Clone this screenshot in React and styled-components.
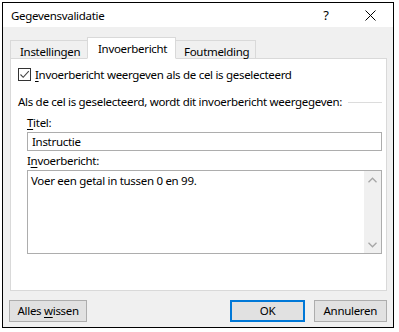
import React from "react";
import styled, { createGlobalStyle } from "styled-components";

const Global = createGlobalStyle`
  html, body { margin: 0; padding: 0; background: #fff; }
  body { font-family: "Noto Sans", "Open Sans", sans-serif; font-size: 12px; color: #000; }
  * { box-sizing: border-box; }
`;

const Window = styled.div`
  margin: 2px 0 0 2px;
  width: 392px;
  height: 326px;
  border: 1px solid #000;
  display: flex;
  flex-direction: column;
  background: #f0f0f0;
  font-family: "Noto Sans", "Open Sans", sans-serif;
  font-size: 11.5px;
  letter-spacing: -0.3px;
`;

const TitleBar = styled.div`
  height: 24px;
  background: #fff;
  display: flex;
  align-items: center;
  padding-left: 8px;
`;

const TitleText = styled.div`
  flex: 1;
  line-height: 16px;
  margin-top: 1px;
`;

const HelpButton = styled.div`
  width: 30px;
  text-align: center;
  font-size: 13px;
  line-height: 16px;
  margin-right: 6px;
`;

const CloseButton = styled.div`
  width: 46px;
  height: 24px;
  display: flex;
  align-items: center;
  justify-content: center;
`;

const Body = styled.div`
  flex: 1;
  display: flex;
  flex-direction: column;
  padding: 10px 6px 6px 7px;
`;

const TabRow = styled.div`
  display: flex;
  align-items: flex-end;
  height: 22px;
  margin-bottom: -1px;
  position: relative;
  z-index: 1;
`;

const Tab = styled.div`
  width: ${(p) => p.$w}px;
  height: ${(p) => (p.$active ? 22 : 19)}px;
  background: ${(p) => (p.$active ? "#fff" : "#f0f0f0")};
  border: 1px solid #d9d9d9;
  border-bottom: ${(p) => (p.$active ? "1px solid #fff" : "1px solid #d9d9d9")};
  border-left: ${(p) => (p.$noLeft ? "none" : "1px solid #d9d9d9")};
  border-right: ${(p) => (p.$noRight ? "none" : "1px solid #d9d9d9")};
  padding-left: ${(p) => p.$pl}px;
  line-height: 16px;
  padding-top: 3px;
  white-space: nowrap;
`;

const Panel = styled.div`
  height: 233px;
  background: #fff;
  border: 1px solid #d9d9d9;
  padding: 9px 4px 0 7px;
  display: flex;
  flex-direction: column;
`;

const CheckRow = styled.div`
  display: flex;
  align-items: center;
  height: 13px;
  gap: 4px;
`;

const CheckBox = styled.div`
  width: 13px;
  height: 13px;
  border: 1px solid #333;
  background: #fff;
  display: flex;
  align-items: center;
  justify-content: center;
`;

const LabelText = styled.span`
  line-height: 16px;
  white-space: nowrap;
`;

const U = styled.span`
  text-decoration: underline;
  text-underline-offset: 2px;
`;

const GroupHeading = styled.div`
  margin-top: 13px;
  height: 16px;
  display: flex;
  align-items: center;
  gap: 6px;
  line-height: 16px;
  white-space: nowrap;
  &::after {
    content: "";
    flex: 1;
    height: 1px;
    background: #dcdcdc;
    margin-top: 1px;
  }
`;

const Section = styled.div`
  padding-left: 9px;
  display: flex;
  flex-direction: column;
`;

const FieldLabel = styled.div`
  margin-top: ${(p) => p.$mt}px;
  line-height: 16px;
  height: 16px;
`;

const TextInput = styled.div`
  margin-top: 1px;
  height: 19px;
  border: 1px solid #adadad;
  padding-left: 4px;
  line-height: 17px;
  background: #fff;
`;

const TextArea = styled.div`
  margin-top: 1px;
  height: 84px;
  border: 1px solid #adadad;
  background: #fff;
  display: flex;
`;

const AreaText = styled.div`
  flex: 1;
  padding: 2px 0 0 3px;
  line-height: 16px;
`;

const ScrollBar = styled.div`
  width: 17px;
  background: #f0f0f0;
  display: flex;
  flex-direction: column;
  justify-content: space-between;
  align-items: center;
  padding: 6px 0 5px;
`;

const ButtonRow = styled.div`
  margin-top: 9px;
  display: flex;
  align-items: center;
`;

const Button = styled.div`
  width: ${(p) => p.$w}px;
  height: 22px;
  background: #e1e1e1;
  border: ${(p) => (p.$primary ? "2px solid #0078d7" : "1px solid #adadad")};
  display: flex;
  align-items: center;
  justify-content: center;
  line-height: 16px;
  margin-left: ${(p) => p.$ml || 0}px;
  white-space: nowrap;
`;

const Chevron = ({ down }) => (
  <svg width="9" height="6" viewBox="0 0 9 6">
    <path
      d={down ? "M0.5 0.8 L4.5 4.8 L8.5 0.8" : "M0.5 5.2 L4.5 1.2 L8.5 5.2"}
      stroke="#a6a6a6"
      strokeWidth="1.3"
      fill="none"
    />
  </svg>
);

export default function App() {
  return (
    <>
      <Global />
      <Window>
        <TitleBar>
          <TitleText>Gegevensvalidatie</TitleText>
          <HelpButton>?</HelpButton>
          <CloseButton>
            <svg width="11" height="11" viewBox="0 0 11 11">
              <path d="M0.5 0.5 L10.5 10.5 M10.5 0.5 L0.5 10.5" stroke="#000" strokeWidth="1" fill="none" />
            </svg>
          </CloseButton>
        </TitleBar>
        <Body>
          <TabRow>
            <Tab $w={77} $pl={9} $noRight>Instellingen</Tab>
            <Tab $w={89} $pl={10} $active>Invoerbericht</Tab>
            <Tab $w={80} $pl={8} $noLeft>Foutmelding</Tab>
          </TabRow>
          <Panel>
            <CheckRow>
              <CheckBox>
                <svg width="11" height="11" viewBox="0 0 11 11">
                  <path d="M1.5 5.5 L4.2 8.3 L9.8 2.2" stroke="#444" strokeWidth="1.1" fill="none" />
                </svg>
              </CheckBox>
              <LabelText>
                <U>I</U>nvoerbericht weergeven als de cel is geselecteerd
              </LabelText>
            </CheckRow>
            <GroupHeading>Als de cel is geselecteerd, wordt dit invoerbericht weergegeven:</GroupHeading>
            <Section>
              <FieldLabel $mt={5}>
                <U>T</U>itel:
              </FieldLabel>
              <TextInput>Instructie</TextInput>
              <FieldLabel $mt={2}>
                I<U>n</U>voerbericht:
              </FieldLabel>
              <TextArea>
                <AreaText>Voer een getal in tussen 0 en 99.</AreaText>
                <ScrollBar>
                  <Chevron />
                  <Chevron down />
                </ScrollBar>
              </TextArea>
            </Section>
          </Panel>
          <ButtonRow>
            <Button $w={79} $ml={-1}>
              Alles&nbsp;<U>w</U>issen
            </Button>
            <Button $w={75} $ml={143} $primary>OK</Button>
            <Button $w={74} $ml={9}>Annuleren</Button>
          </ButtonRow>
        </Body>
      </Window>
    </>
  );
}
